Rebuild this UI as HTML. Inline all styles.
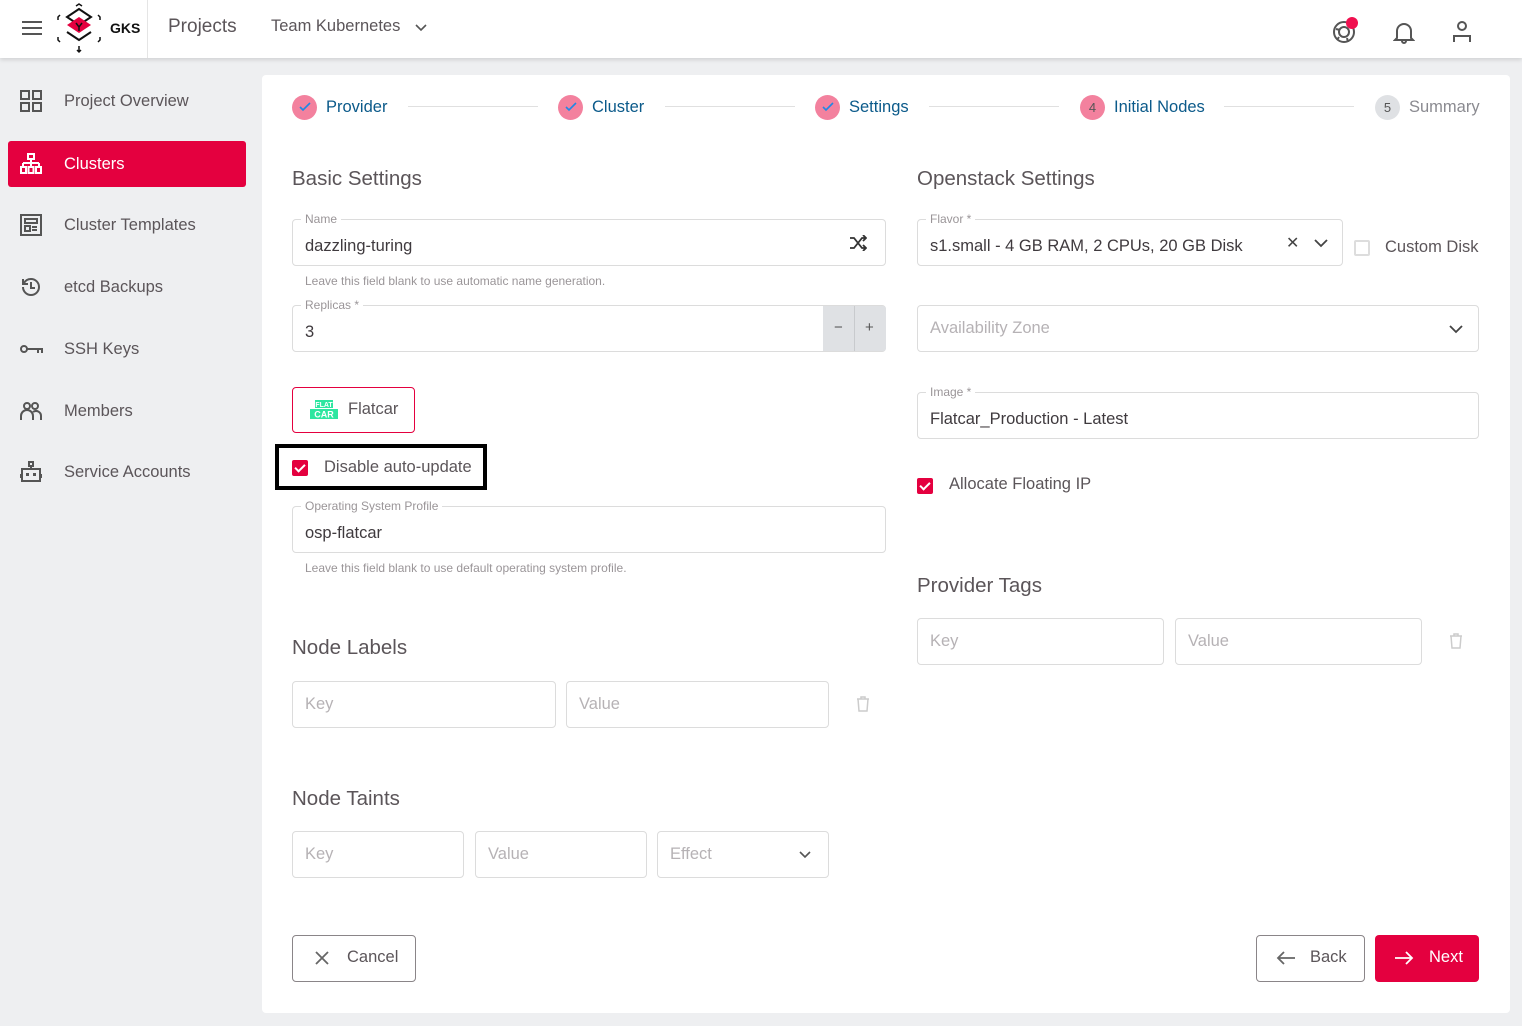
<!DOCTYPE html>
<html><head><meta charset="utf-8"><style>
*{box-sizing:border-box;margin:0;padding:0}
body{width:1522px;height:1026px;background:#eeeff1;font-family:"Liberation Sans",sans-serif;color:#5b5559;position:relative;overflow:hidden}
.abs{position:absolute}
header{position:absolute;left:0;top:0;width:1522px;height:58px;background:#fff;box-shadow:0 2px 4px rgba(0,0,0,.12)}
.nav{position:absolute;left:8px;width:238px;height:46px;font-size:16.5px;display:flex;align-items:center;padding-left:56px;color:#5b5559}
.nav svg{position:absolute;left:12px}
.card{position:absolute;left:262px;top:75px;width:1248px;height:938px;background:#fff;border-radius:4px}
.step{position:absolute;top:96px;font-size:16.5px;color:#0b5a8a;display:flex;align-items:center;height:22px}
.circ{width:25px;height:25px;border-radius:50%;background:#f3819e;display:inline-flex;align-items:center;justify-content:center;margin-right:9px;font-size:13px;color:#555}
.line{position:absolute;top:106px;height:1px;background:#e0e0e0}
h2{position:absolute;font-size:20.5px;font-weight:normal;color:#5b5559;margin-top:1px}
.f{position:absolute;border:1px solid #dcdcdc;border-radius:4px;height:47px;font-size:16.5px;display:flex;align-items:center;padding-left:12px;color:#3f3a3e}
.f.v{padding-top:8px}
.ph{color:#b6b2b5}
.lbl{position:absolute;font-size:12px;color:#9a9598;background:#fff;padding:0 4px;top:-8px;left:8px;line-height:14px}
.hint{position:absolute;font-size:12px;color:#9a9598}
.cb{position:absolute;width:16px;height:16px;border-radius:2px;background:#e4003f}
.cb:after{content:"";position:absolute;left:5px;top:2px;width:4px;height:8px;border:solid #fff;border-width:0 2px 2px 0;transform:rotate(45deg)}
.trash{position:absolute}
</style></head><body>
<header>
<svg class="abs" style="left:21px;top:20px" width="22" height="16"><path d="M1 2h20M1 8h20M1 14h20" stroke="#555" stroke-width="2"/></svg>
<svg class="abs" style="left:54px;top:2px" width="50" height="52" viewBox="0 0 50 52">
<path d="M22 4l3-2 3 2" stroke="#111" stroke-width="1.5" fill="none"/>
<path d="M25 7l12 8-12 8-12-8z" fill="none" stroke="#111" stroke-width="2"/>
<path d="M13 23l12-8 12 8-12 8z" fill="#e4003f"/>
<path d="M13 30l12 8 12-8" fill="none" stroke="#111" stroke-width="2"/>
<path d="M22 21l3 4 3-4M25 25v4" stroke="#111" stroke-width="1.5" fill="none"/>
<path d="M6 13l-2 2v3M44 13l2 2v3M6 40l-2-2v-3M44 40l2-2v-3M25 44v6M23 48l2 2 2-2" stroke="#111" stroke-width="1.5" fill="none"/>
</svg>
<div class="abs" style="left:110px;top:20px;font-size:14px;font-weight:bold;color:#111">GKS</div>
<div class="abs" style="left:147px;top:0;width:1px;height:58px;background:#e5e5e5"></div>
<div class="abs" style="left:168px;top:16px;font-size:19px;color:#5b5559">Projects</div>
<div class="abs" style="left:271px;top:17px;font-size:16.5px;color:#5b5559">Team Kubernetes</div>
<svg class="abs" style="left:414px;top:23px" width="14" height="10"><path d="M2 2l5 5 5-5" stroke="#555" stroke-width="1.6" fill="none"/></svg>
<svg class="abs" style="left:1332px;top:20px" width="24" height="24"><circle cx="12" cy="12" r="10" fill="none" stroke="#555" stroke-width="2"/><circle cx="12" cy="12" r="5" fill="none" stroke="#555" stroke-width="2"/><path d="M4 9l4 1M15 18l1 4M7 17l-2 3" stroke="#555" stroke-width="2"/></svg>
<div class="abs" style="left:1346px;top:17px;width:12px;height:12px;border-radius:50%;background:#f0104f"></div>
<svg class="abs" style="left:1393px;top:20px" width="22" height="24"><path d="M4 18V11a7 7 0 0114 0v7l2 2H2z M9 21a2 2 0 004 0" fill="none" stroke="#555" stroke-width="2"/></svg>
<svg class="abs" style="left:1451px;top:19px" width="22" height="24"><circle cx="11" cy="7" r="4" fill="none" stroke="#555" stroke-width="2"/><path d="M3 23v-6h16v6" fill="none" stroke="#555" stroke-width="2"/></svg>
</header>

<div class="nav" style="top:78px"><svg width="22" height="22"><path d="M1 1h8v8H1zM13 1h8v8h-8zM1 13h8v8H1zM13 13h8v8h-8z" fill="none" stroke="#555" stroke-width="2"/></svg>Project Overview</div>
<div class="nav" style="top:141px;background:#e4003f;color:#fff;border-radius:3px"><svg width="22" height="22"><path d="M8 1h6v5H8zM11 6v4M3 10h16M3 10v4M11 10v4M19 10v4M1 14h5v6H1zM8.5 14h5v6h-5zM16 14h5v6h-5z" fill="none" stroke="#fff" stroke-width="2"/></svg>Clusters</div>
<div class="nav" style="top:202px"><svg width="22" height="22"><path d="M1 1h20v20H1zM5 5h12v4H5zM5 12h5v5H5zM12 13h5M12 16h5" fill="none" stroke="#555" stroke-width="2"/></svg>Cluster Templates</div>
<div class="nav" style="top:264px"><svg width="22" height="22"><path d="M3 11a8 8 0 108-8 8 8 0 00-7 4M3 3v5h5M11 6v6h4" fill="none" stroke="#555" stroke-width="2"/></svg>etcd Backups</div>
<div class="nav" style="top:326px"><svg width="24" height="10"><circle cx="4" cy="5" r="3" fill="none" stroke="#555" stroke-width="2"/><path d="M7 5h16M18 5v4M22 5v4" stroke="#555" stroke-width="2"/></svg>SSH Keys</div>
<div class="nav" style="top:388px"><svg width="22" height="20"><circle cx="7" cy="5" r="3" fill="none" stroke="#555" stroke-width="2"/><circle cx="15" cy="5" r="3" fill="none" stroke="#555" stroke-width="2"/><path d="M1 19v-4a5 5 0 0112 0v4M13 11a5 5 0 018 4v4" fill="none" stroke="#555" stroke-width="2"/></svg>Members</div>
<div class="nav" style="top:449px"><svg width="22" height="22"><path d="M9 1h4v4H9zM11 5v3M2 8h18v12H2zM0 13v4M22 13v4" fill="none" stroke="#555" stroke-width="2"/><rect x="6" y="12" width="3" height="3" fill="#555"/><rect x="13" y="12" width="3" height="3" fill="#555"/></svg>Service Accounts</div>

<div class="card"></div>
<div class="step" style="left:292px"><span class="circ"><svg width="12" height="10"><path d="M1 5l3 3 7-7" stroke="#1e88e5" stroke-width="1.6" fill="none"/></svg></span>Provider</div>
<div class="line" style="left:408px;width:130px"></div>
<div class="step" style="left:558px"><span class="circ"><svg width="12" height="10"><path d="M1 5l3 3 7-7" stroke="#1e88e5" stroke-width="1.6" fill="none"/></svg></span>Cluster</div>
<div class="line" style="left:665px;width:130px"></div>
<div class="step" style="left:815px"><span class="circ"><svg width="12" height="10"><path d="M1 5l3 3 7-7" stroke="#1e88e5" stroke-width="1.6" fill="none"/></svg></span>Settings</div>
<div class="line" style="left:929px;width:130px"></div>
<div class="step" style="left:1080px"><span class="circ">4</span>Initial Nodes</div>
<div class="line" style="left:1224px;width:130px"></div>
<div class="step" style="left:1375px;color:#8a8a90"><span class="circ" style="background:#dfe1e4">5</span>Summary</div>

<h2 style="left:292px;top:166px">Basic Settings</h2>
<div class="f v" style="left:292px;top:219px;width:594px"><span class="lbl">Name</span>dazzling-turing
<svg class="abs" style="left:556px;top:15px" width="18" height="16"><path d="M1 3h4l8 10h4M1 13h4l8-10h4M14 0l3 3-3 3M14 10l3 3-3 3" fill="none" stroke="#333" stroke-width="1.8"/></svg></div>
<div class="hint" style="left:305px;top:274px">Leave this field blank to use automatic name generation.</div>
<div class="f v" style="left:292px;top:305px;width:594px"><span class="lbl">Replicas *</span>3
<div class="abs" style="left:530px;top:0;width:63px;height:45px;background:#dfe1e4;border-radius:0 3px 3px 0"></div>
<div class="abs" style="left:561px;top:0;width:1px;height:45px;background:#c8cacd"></div>
<div class="abs" style="left:541px;top:13px;font-size:15px;color:#555">−</div>
<div class="abs" style="left:572px;top:13px;font-size:15px;color:#555">+</div></div>

<div class="abs" style="left:292px;top:387px;width:123px;height:46px;border:1px solid #e4003f;border-radius:4px"></div>
<svg class="abs" style="left:309px;top:400px" width="30" height="20"><rect x="6" y="0" width="18" height="8" fill="#2ee6a0"/><rect x="1" y="9" width="28" height="10" fill="#2ee6a0"/><text x="15" y="7" font-size="7" fill="#fff" text-anchor="middle" font-family="Liberation Sans" font-weight="bold">FLAT</text><text x="15" y="17.5" font-size="9" fill="#fff" text-anchor="middle" font-family="Liberation Sans" font-weight="bold">CAR</text></svg>
<div class="abs" style="left:348px;top:400px;font-size:16.5px">Flatcar</div>

<div class="abs" style="left:275px;top:444px;width:212px;height:46px;border:4px solid #000"></div>
<div class="cb" style="left:292px;top:460px"></div>
<div class="abs" style="left:324px;top:458px;font-size:16.5px">Disable auto-update</div>

<div class="f v" style="left:292px;top:506px;width:594px"><span class="lbl">Operating System Profile</span>osp-flatcar</div>
<div class="hint" style="left:305px;top:561px">Leave this field blank to use default operating system profile.</div>

<h2 style="left:292px;top:635px">Node Labels</h2>
<div class="f ph" style="left:292px;top:681px;width:264px">Key</div>
<div class="f ph" style="left:566px;top:681px;width:263px">Value</div>
<svg class="trash" style="left:856px;top:696px" width="14" height="16"><path d="M1 3h12M5 3V1h4v2M2 3l1 12h8l1-12" fill="none" stroke="#ccc" stroke-width="1.5"/></svg>

<h2 style="left:292px;top:786px">Node Taints</h2>
<div class="f ph" style="left:292px;top:831px;width:172px">Key</div>
<div class="f ph" style="left:475px;top:831px;width:172px">Value</div>
<div class="f ph" style="left:657px;top:831px;width:172px">Effect<svg class="abs" style="left:140px;top:18px" width="14" height="10"><path d="M2 2l5 5 5-5" stroke="#555" stroke-width="1.6" fill="none"/></svg></div>

<h2 style="left:917px;top:166px">Openstack Settings</h2>
<div class="f v" style="left:917px;top:219px;width:426px"><span class="lbl">Flavor *</span>s1.small - 4 GB RAM, 2 CPUs, 20 GB Disk
<div class="abs" style="left:368px;top:13px;font-size:16px;color:#444">✕</div>
<svg class="abs" style="left:395px;top:18px" width="16" height="10"><path d="M2 2l6 6 6-6" stroke="#444" stroke-width="1.8" fill="none"/></svg></div>
<div class="abs" style="left:1354px;top:240px;width:16px;height:16px;border:2px solid #ddd;border-radius:2px"></div>
<div class="abs" style="left:1385px;top:238px;font-size:16.5px">Custom Disk</div>
<div class="f ph" style="left:917px;top:305px;width:562px">Availability Zone<svg class="abs" style="left:530px;top:18px" width="16" height="10"><path d="M2 2l6 6 6-6" stroke="#444" stroke-width="1.8" fill="none"/></svg></div>
<div class="f v" style="left:917px;top:392px;width:562px"><span class="lbl">Image *</span>Flatcar_Production - Latest</div>
<div class="cb" style="left:917px;top:478px"></div>
<div class="abs" style="left:949px;top:475px;font-size:16.5px">Allocate Floating IP</div>

<h2 style="left:917px;top:573px">Provider Tags</h2>
<div class="f ph" style="left:917px;top:618px;width:247px">Key</div>
<div class="f ph" style="left:1175px;top:618px;width:247px">Value</div>
<svg class="trash" style="left:1449px;top:633px" width="14" height="16"><path d="M1 3h12M5 3V1h4v2M2 3l1 12h8l1-12" fill="none" stroke="#ccc" stroke-width="1.5"/></svg>

<div class="abs" style="left:292px;top:935px;width:124px;height:47px;border:1px solid #8a8588;border-radius:4px"></div>
<svg class="abs" style="left:315px;top:951px" width="14" height="14"><path d="M1 1l12 12M13 1L1 13" stroke="#666" stroke-width="1.8"/></svg>
<div class="abs" style="left:347px;top:948px;font-size:16.5px">Cancel</div>
<div class="abs" style="left:1256px;top:935px;width:109px;height:47px;border:1px solid #8a8588;border-radius:4px"></div>
<svg class="abs" style="left:1276px;top:950px" width="20" height="16"><path d="M19 8H2M8 2L2 8l6 6" stroke="#666" stroke-width="1.8" fill="none"/></svg>
<div class="abs" style="left:1310px;top:948px;font-size:16.5px">Back</div>
<div class="abs" style="left:1375px;top:935px;width:104px;height:47px;background:#e4003f;border-radius:4px"></div>
<svg class="abs" style="left:1394px;top:950px" width="20" height="16"><path d="M1 8h17M12 2l6 6-6 6" stroke="#fff" stroke-width="1.8" fill="none"/></svg>
<div class="abs" style="left:1429px;top:948px;font-size:16.5px;color:#fff">Next</div>
</body></html>
